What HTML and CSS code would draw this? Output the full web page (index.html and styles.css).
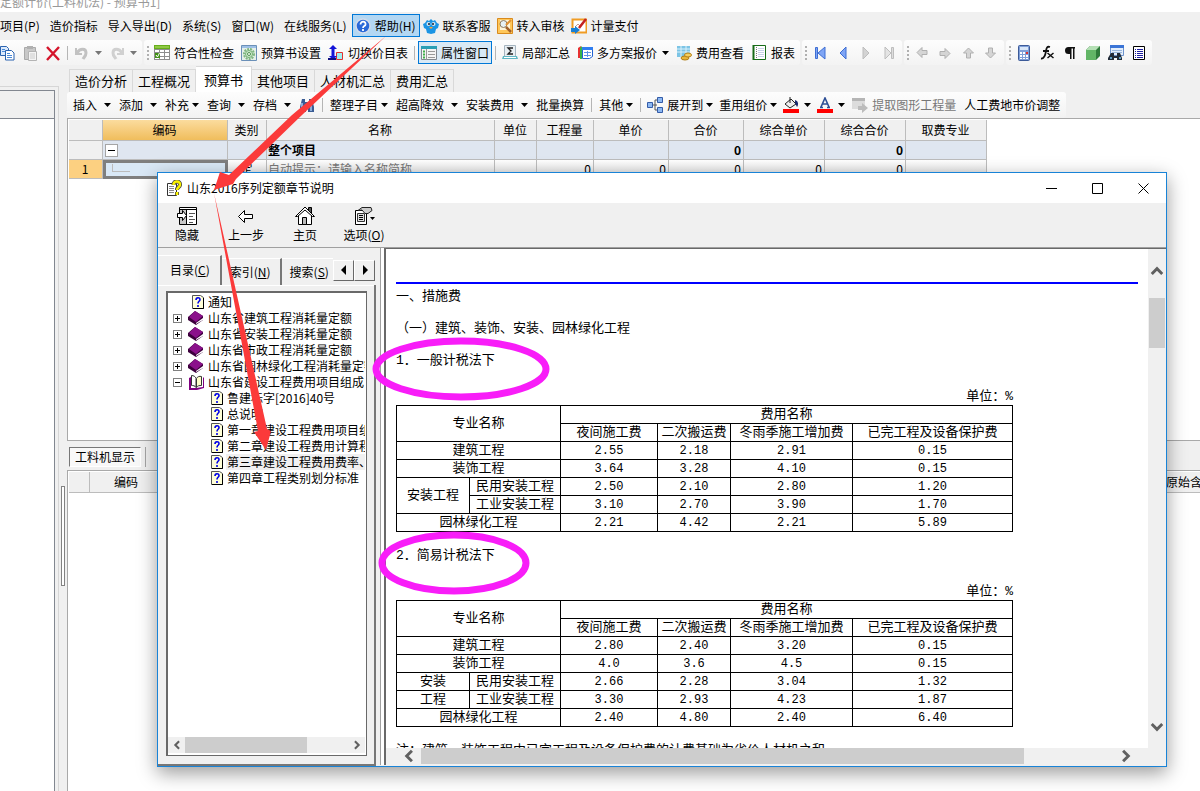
FILE: index.html
```html
<!DOCTYPE html>
<html lang="zh-CN">
<head>
<meta charset="utf-8">
<title>预算书</title>
<link rel="stylesheet" href="styles.css">
</head>
<body>
<svg class="defs" aria-hidden="true">
  <symbol id="caret" viewBox="0 0 7 4"><path d="M0 0h7L3.500 4z" fill="currentColor"/></symbol>
  <symbol id="copy" viewBox="0 0 16 16"><path d="M1.500 1.500h6l2 2v7h-8z" fill="#dbe9fb" stroke="#2a63b0"/><path d="M6.500 5.500h6l2.500 2.500v7h-8.500z" fill="#fff" stroke="#2a63b0"/><path d="M8 8.500h3M8 10.500h5M8 12.500h5M3 4.500h3M3 6.500h3" stroke="#4a8ad8"/></symbol>
  <symbol id="paste" viewBox="0 0 16 16"><path d="M2.500 2.500h11v12h-11z" fill="#c8c8c8" stroke="#aaa"/><path d="M5 1h6v3H5z" fill="#b0b0b0"/><path d="M6.500 6.500h8v9h-8z" fill="#f4f4f4" stroke="#b4b4b4"/><path d="M8 9h5M8 11h5M8 13h5" stroke="#ccc"/></symbol>
  <symbol id="del" viewBox="0 0 16 16"><path d="M2 2l12 13M14 2L2 15" stroke="#d5142b" stroke-width="2.400" fill="none"/></symbol>
  <symbol id="undo" viewBox="0 0 16 16"><path d="M2 3v6h6" fill="none" stroke="#c2c2c2" stroke-width="2"/><path d="M3 8c3-5 9-5 9 0 0 3-2 4-3 6" fill="none" stroke="#c2c2c2" stroke-width="3"/></symbol>
  <symbol id="redo" viewBox="0 0 16 16"><path d="M14 3v6H8" fill="none" stroke="#d0d0d0" stroke-width="2"/><path d="M13 8c-3-5-9-5-9 0 0 3 2 4 3 6" fill="none" stroke="#d0d0d0" stroke-width="3"/></symbol>
  <symbol id="check" viewBox="0 0 16 16"><path d="M0 1h16v14H0z" fill="#8d8d8d"/><path d="M0 0h16v4H0z" fill="#67ae1c"/><path d="M1 2h14" stroke="#b8e46d"/><path d="M1 5h4v2H1zM6 5h4v2H6zM11 5h4v2h-4zM6 8h4v3H6zM11 8h4v3h-4zM6 12h4v2H6zM11 12h4v2h-4zM1 8h4v6H1z" fill="#fff"/><path d="M1 8h5v5H1z" fill="#3f8f13"/><path d="M2 10l1.500 2 2-4" stroke="#fff" fill="none"/></symbol>
  <symbol id="gear" viewBox="0 0 16 16"><path d="M.5.5h15v15H.5z" fill="#e5f0ea" stroke="#6b90b8"/><path d="M1 1h14v2H1z" fill="#9dc0e6"/><circle cx="8" cy="9" r="5" fill="none" stroke="#7fb681" stroke-width="2" stroke-dasharray="2 1"/><circle cx="8" cy="9" r="3.500" fill="#d3ead3" stroke="#6fb070"/><circle cx="8" cy="9" r="1.500" fill="#fff" stroke="#4d944f"/></symbol>
  <symbol id="switch" viewBox="0 0 16 16"><path d="M8.500 7.500h6v7h-6z" fill="#9ff0f0" stroke="#e03030"/><path d="M5 0l4 4H6.500v7H9l-4 4-4-4h2.500V4H1z" fill="#1414d8"/><path d="M0 14h8" stroke="#101080" stroke-width="2"/></symbol>
  <symbol id="props" viewBox="0 0 16 16"><path d="M.5 1.500h15v13H.5z" fill="#f4f4f4" stroke="#808890"/><path d="M0 1h16v3H0z" fill="#2a9fb5"/><path d="M5.500 4v11" stroke="#999"/><path d="M7 6.500h7M7 9.500h7M7 12.500h7" stroke="#999"/><path d="M2 6.500h2M2 9.500h2M2 12.500h2" stroke="#3fb04a" stroke-width="2"/></symbol>
  <symbol id="sigma" viewBox="0 0 16 16"><path d="M2.500.5h11v11h-11z" fill="#e9eff3" stroke="#a5b4bf"/><path d="M11 3H6l3 3-3 3h5" fill="none" stroke="#222" stroke-width="1.300"/><path d="M1 11h14l1 3H0z" fill="#62b7c4"/><path d="M2 12.500h12" stroke="#fff"/></symbol>
  <symbol id="multi" viewBox="0 0 16 16"><path d="M1 3l3-2v12H1z" fill="#e83232"/><path d="M3 3l2-2v13H3z" fill="#34b34a"/><path d="M5.500 2.500h10v9l-3 2h-7z" fill="#fff" stroke="#2362d2"/><path d="M5 2h11v3H5z" fill="#2f7df0"/><path d="M7 7.500h7M7 10.500h7M10.500 6v6" stroke="#5c93e8"/></symbol>
  <symbol id="fee" viewBox="0 0 16 16"><path d="M1 1h13v11H1z" fill="#7cc4e5"/><path d="M1 4h13M1 7h13M5 1v11M10 1v11" stroke="#d9f1fb"/><ellipse cx="9" cy="13" rx="4" ry="2" fill="#e7b53a" stroke="#b07d15"/><ellipse cx="12" cy="10" rx="3.500" ry="2" fill="#f5cf60" stroke="#b07d15"/></symbol>
  <symbol id="report" viewBox="0 0 16 16"><path d="M2.500.5h12v14h-12z" fill="#fff" stroke="#176b17"/><path d="M2.500 0v15" stroke="#176b17" stroke-width="2"/><path d="M5.500 2v12" stroke="#777" stroke-dasharray="1 1"/><path d="M7 3.500h6M7 5.500h6M7 7.500h6M7 9.500h6M7 11.500h6" stroke="#c8d0e8"/></symbol>
  <symbol id="first" viewBox="0 0 16 16"><path d="M3.500 2.500h2v11h-2z" fill="#7fa5f5" stroke="#3e6ed3"/><path d="M13 2v12L6 8z" fill="#7fa5f5" stroke="#3e6ed3"/></symbol>
  <symbol id="prev" viewBox="0 0 16 16"><path d="M11 2v12L5 8z" fill="#7fa5f5" stroke="#3e6ed3"/></symbol>
  <symbol id="next" viewBox="0 0 16 16"><path d="M5 2v12l6-6z" fill="#d3d3d3" stroke="#bdbdbd"/></symbol>
  <symbol id="last" viewBox="0 0 16 16"><path d="M10.500 2.500h2v11h-2z" fill="#ddd" stroke="#bdbdbd"/><path d="M4 2v12l6-6z" fill="#e4e4e4" stroke="#bdbdbd"/></symbol>
  <symbol id="arrow" viewBox="0 0 16 16"><path d="M3 7.500l5-5v3h5v4H8v3z" fill="#d5d5d5" stroke="#b0b0b0"/></symbol>
  <symbol id="calc" viewBox="0 0 16 16"><rect x="2.500" y=".5" width="11" height="15" rx="1" fill="#7f9fd8" stroke="#3c5a98"/><path d="M4 2h8v3H4z" fill="#d8e6f8"/><path d="M4 7h2v2H4zM7 7h2v2H7zM4 10h2v2H4zM7 10h2v2H7zM10 10h2v2h-2zM4 13h2v1H4zM7 13h2v1H7zM10 13h2v1h-2z" fill="#fff"/><path d="M10 7h2v2h-2z" fill="#d33"/></symbol>
  <symbol id="fx" viewBox="0 0 16 16"><path d="M11 2C8 1 7.500 3 7 6S6 14 2 13.500M4 6h6" fill="none" stroke="#111" stroke-width="1.800"/><path d="M8.500 8l6 5M14.500 8l-6 5" stroke="#111" stroke-width="1.500"/></symbol>
  <symbol id="pilcrow" viewBox="0 0 16 16"><path d="M13 2H6.500a3.500 3.500 0 0 0 0 7H8v5h1.500V3.500h1.500V14h1.500V3.500H13z" fill="#111"/></symbol>
  <symbol id="cube" viewBox="0 0 16 16"><path d="M1 5l4-4h10v10l-4 4H1z" fill="#2e7a3a"/><path d="M1 5h10v10H1z" fill="#62b566"/><path d="M1 5l4-4h10l-4 4z" fill="#b5e0b5"/></symbol>
  <symbol id="find" viewBox="0 0 16 16"><path d="M2.500.5h13v10h-13z" fill="#e3eefb" stroke="#6c92cc"/><path d="M2 0h14v3H2z" fill="#3b74d6"/><path d="M4 5.500h10M4 7.500h10" stroke="#9ab7de"/><path d="M3 8h3v3h3V8h3l2 5v2H9v-2H6v2H0v-2z" fill="#222b38"/><circle cx="3" cy="13" r="1" fill="#6fc5f2"/><circle cx="12" cy="13" r="1" fill="#6fc5f2"/></symbol>
  <symbol id="list" viewBox="0 0 16 16"><path d="M2.500 1.500h11v13h-11z" fill="#fff" stroke="#000"/><path d="M4 4.500h1M6 4.500h6M4 6.500h1M6 6.500h6M4 8.500h1M6 8.500h6M4 10.500h1M6 10.500h6M4 12.500h1M6 12.500h6" stroke="#2020a0"/></symbol>
  <symbol id="qball" viewBox="0 0 16 16"><circle cx="8" cy="8" r="7" fill="#2968d8" stroke="#d3dcea" stroke-width="1.500"/><path d="M5.500 6.500c0-4 5.500-3.500 5 0-.3 1.800-2.500 1.500-2.500 3.500M8 11v2" fill="none" stroke="#fff" stroke-width="1.800"/></symbol>
  <symbol id="mascot" viewBox="0 0 16 16"><path d="M4 2l2 1 2-2 2 2 2-1 2 3 2 1-1 4-2 1-1 4-4 1-4-1-1-4-2-1-1-4 2-1z" fill="#1b94e4"/><circle cx="5.500" cy="6" r="2" fill="#d5e8f4"/><circle cx="10.500" cy="6" r="2" fill="#d5e8f4"/><circle cx="6" cy="6" r="1" fill="#123"/><circle cx="10" cy="6" r="1" fill="#123"/><path d="M6 9h4l-2 2z" fill="#f5a53c"/></symbol>
  <symbol id="audit" viewBox="0 0 16 16"><path d="M.5.5h15v15H.5z" fill="#ffc75a" stroke="#d98a1c"/><path d="M3 2h10v10H3z" fill="#fff4d8"/><circle cx="6.500" cy="6" r="3.500" fill="#e7f1f6" stroke="#8e7b62"/><path d="M9 9l5 5" stroke="#a3612a" stroke-width="2.500"/><path d="M14 2L9 7" stroke="#e19031" stroke-width="2"/></symbol>
  <symbol id="pay" viewBox="0 0 16 16"><path d="M1.500 1.500h14v13h-14z" fill="#fff" stroke="#f09c24" stroke-width="2"/><path d="M4 9l3-3 2 2 2-3" stroke="#c98" fill="none"/><path d="M15 1L8 10" stroke="#c32121" stroke-width="2.500"/><path d="M0 10h4V8l5 4-5 4v-2H0z" fill="#1a7fd2"/></symbol>
  <symbol id="bino" viewBox="0 0 16 16"><path d="M3 2h3v3h4V2h3l2 8v5H9v-5H7v5H1v-5z" fill="#3a5c94"/><path d="M3 6v8M12 6v8" stroke="#a9c8ef" stroke-width="1.500"/></symbol>
  <symbol id="tree" viewBox="0 0 16 16"><path d="M5 8h5M8 3v10M8 3h3M8 13h3" stroke="#555" fill="none"/><path d="M.5 5.500h5v5h-5zM10.500.5h5v5h-5zM10.500 10.500h5v5h-5z" fill="#8db8f2" stroke="#345ca8"/></symbol>
  <symbol id="bucket" viewBox="0 0 16 16"><path d="M2 7l6-5 5 5-6 4z" fill="#eee" stroke="#222"/><path d="M7 0v6" stroke="#222"/><path d="M12 3c3 1 4 4 2 7l-2-4z" fill="#1a2a70"/><path d="M0 12h16v4H0z" fill="#f00"/></symbol>
  <symbol id="fontcolor" viewBox="0 0 16 16"><path d="M4 10l4-9 4 9M5.500 7h5M3 10.500h3M10 10.500h3" fill="none" stroke="#2d4f96" stroke-width="1.600"/><path d="M0 12h16v4H0z" fill="#f00"/></symbol>
  <symbol id="extract" viewBox="0 0 16 16"><path d="M0 1h13v11H0z" fill="#dcdcdc"/><path d="M0 1h13v3H0z" fill="#b5b5b5"/><path d="M6 9h4V6l6 5-6 5v-3H6z" fill="#bcbcbc"/></symbol>
  <symbol id="topic" viewBox="0 0 12 14"><path d="M.5.5h8l3 2v11H.5z" fill="#ffffd8" stroke="#555"/><path d="M11.500 3v10.500H1" stroke="#000" fill="none"/><path d="M4 5c0-3 4-3 4-.5C8 6.500 6 6 6 8.500M6 10v2" fill="none" stroke="#0000e8" stroke-width="1.600"/></symbol>
  <symbol id="book" viewBox="0 0 16 16"><path d="M0 7l7-6 8 5v4l-7 5-8-5z" fill="#3c003c"/><path d="M1 7l6-6 8 5-7 6z" fill="#8b118b"/><path d="M8 13l7-5v2l-7 4z" fill="#fff"/></symbol>
  <symbol id="openbook" viewBox="0 0 16 16"><path d="M1 4l2-1v11h5l7-1V3l1 1v10l-7 2H1z" fill="#800080"/><path d="M3.500 1.500c2 0 4 1 4.500 3v9c-1-2-3-2-4.500-2z" fill="#fff" stroke="#333"/><path d="M8.500 4.500c1-2 3-2.500 5-2v9c-2 0-4 0-5 2z" fill="#ffffc8" stroke="#333"/></symbol>
  <symbol id="helpwin" viewBox="0 0 16 16"><path d="M1.500 3.500h9v12h-9z" fill="#fff" stroke="#333"/><path d="M3 6.500h5M3 8.500h5M3 10.500h5M3 12.500h5" stroke="#888"/><path d="M7.500 5c0-5 7-4.500 6.500 0-.5 2.500-3 2-3 5M11 12v3" fill="none" stroke="#444" stroke-width="4"/><path d="M7.500 5c0-5 7-4.500 6.500 0-.5 2.500-3 2-3 5M11 12v3" fill="none" stroke="#f8f000" stroke-width="2.500"/></symbol>
  <symbol id="hide" viewBox="0 0 22 20"><path d="M3.500 1.500h17v17h-17z" fill="#fff" stroke="#000"/><path d="M3 3.500h18" stroke="#000"/><path d="M4 4h6v14H4z" fill="#c8c8c8"/><path d="M10.500 4v15" stroke="#000"/><path d="M13 7.500h6M13 10.500h4M13 13.500h6M13 16.500h4" stroke="#555"/><path d="M1.500 7.500h5v-3l4 5-4 5v-3h-5z" fill="#fff" stroke="#000"/></symbol>
  <symbol id="back" viewBox="0 0 22 20"><path d="M3.500 10.500l6-6v4h8v4h-8v4z" fill="#fff" stroke="#000"/></symbol>
  <symbol id="home" viewBox="0 0 22 20"><path d="M14.500 1.500h3v6h-3z" fill="#555" stroke="#000"/><path d="M4.500 9L11 3l6.500 6v9.500h-13z" fill="#fff" stroke="#000"/><path d="M1.500 10.500L11 1l9.500 9.500h-2L11 4l-7.500 6.500z" fill="#fff" stroke="#000"/><path d="M8.500 11.500h4v7h-4z" fill="#bbb" stroke="#000"/></symbol>
  <symbol id="options" viewBox="0 0 22 20"><path d="M2.500 4.500h11v14h-11z" fill="#fff" stroke="#000"/><path d="M4.500 7.500h7v8h-7z" fill="#ddd" stroke="#333"/><path d="M6 9.500h4M6 11.500h4M6 13.500h4" stroke="#000"/><path d="M5 4.500l4-3h9l1 3-4 3h-3L9 4z" fill="#ccc" stroke="#222"/><path d="M17 11h5l-2.500 3z" fill="#000"/></symbol>
  <symbol id="chev" viewBox="0 0 12 12"><path d="M8.500 1.500L4 6l4.500 4.500" fill="none" stroke="#606060" stroke-width="2.500"/></symbol>
</svg>

<div class="app">
  <header class="titlebar">定额计价(工料机法) - 预算书1]</header>

  <nav class="menubar">
    <button class="menu menu-first">项目(P)</button>
    <button class="menu">造价指标</button>
    <button class="menu">导入导出(D)</button>
    <button class="menu">系统(S)</button>
    <button class="menu">窗口(W)</button>
    <button class="menu">在线服务(L)</button>
    <button class="menu menu-open"><svg class="ico"><use href="#qball"/></svg>帮助(H)</button>
    <button class="menu menu-link"><svg class="ico"><use href="#mascot"/></svg>联系客服</button>
    <button class="menu menu-link"><svg class="ico"><use href="#audit"/></svg>转入审核</button>
    <button class="menu menu-link"><svg class="ico"><use href="#pay"/></svg>计量支付</button>
  </nav>

  <div class="toolbars">
    <div class="group group-edit">
      <button class="tool" aria-label="复制"><svg class="ico"><use href="#copy"/></svg></button>
      <button class="tool" aria-label="粘贴"><svg class="ico"><use href="#paste"/></svg></button>
      <button class="tool" aria-label="删除"><svg class="ico"><use href="#del"/></svg></button>
      <i class="sep"></i>
      <button class="tool muted" aria-label="撤销"><svg class="ico"><use href="#undo"/></svg><svg class="caret"><use href="#caret"/></svg></button>
      <button class="tool muted" aria-label="恢复"><svg class="ico"><use href="#redo"/></svg><svg class="caret"><use href="#caret"/></svg></button>
    </div>
    <div class="group">
      <i class="grip"></i>
      <button class="tool"><svg class="ico"><use href="#check"/></svg>符合性检查</button>
      <button class="tool"><svg class="ico"><use href="#gear"/></svg>预算书设置</button>
      <button class="tool"><svg class="ico"><use href="#switch"/></svg>切换价目表</button>
      <i class="sep"></i>
      <button class="tool tool-on"><svg class="ico"><use href="#props"/></svg>属性窗口</button>
      <i class="sep"></i>
      <button class="tool"><svg class="ico"><use href="#sigma"/></svg>局部汇总</button>
      <button class="tool"><svg class="ico"><use href="#multi"/></svg>多方案报价<svg class="caret"><use href="#caret"/></svg></button>
      <button class="tool"><svg class="ico"><use href="#fee"/></svg>费用查看</button>
      <button class="tool"><svg class="ico"><use href="#report"/></svg>报表</button>
    </div>
    <div class="group">
      <i class="grip"></i>
      <button class="tool" aria-label="首条"><svg class="ico"><use href="#first"/></svg></button>
      <button class="tool" aria-label="上一条"><svg class="ico"><use href="#prev"/></svg></button>
      <button class="tool" aria-label="下一条"><svg class="ico"><use href="#next"/></svg></button>
      <button class="tool" aria-label="末条"><svg class="ico"><use href="#last"/></svg></button>
    </div>
    <div class="group">
      <i class="grip"></i>
      <button class="tool" aria-label="左移"><svg class="ico"><use href="#arrow"/></svg></button>
      <button class="tool" aria-label="右移"><svg class="ico turn-right"><use href="#arrow"/></svg></button>
      <button class="tool" aria-label="上移"><svg class="ico turn-up"><use href="#arrow"/></svg></button>
      <button class="tool" aria-label="下移"><svg class="ico turn-down"><use href="#arrow"/></svg></button>
    </div>
    <div class="group">
      <i class="grip"></i>
      <button class="tool" aria-label="计算器"><svg class="ico"><use href="#calc"/></svg></button>
      <button class="tool" aria-label="函数"><svg class="ico"><use href="#fx"/></svg></button>
      <button class="tool" aria-label="段落"><svg class="ico"><use href="#pilcrow"/></svg></button>
      <button class="tool" aria-label="体积"><svg class="ico"><use href="#cube"/></svg></button>
      <button class="tool" aria-label="查找"><svg class="ico"><use href="#find"/></svg></button>
      <button class="tool" aria-label="列表"><svg class="ico"><use href="#list"/></svg></button>
    </div>
  </div>

  <div class="workspace">
    <aside class="side"><div class="side-box"><div class="side-head"></div></div></aside>
    <div class="gutter"><i class="handle"></i></div>
    <main class="main">
      <nav class="tabs">
        <button class="tab">造价分析</button>
        <button class="tab">工程概况</button>
        <button class="tab tab-on">预算书</button>
        <button class="tab">其他项目</button>
        <button class="tab">人材机汇总</button>
        <button class="tab">费用汇总</button>
      </nav>
      <div class="actions">
        <button class="act split">插入<svg class="caret"><use href="#caret"/></svg></button>
        <button class="act split">添加<svg class="caret"><use href="#caret"/></svg></button>
        <button class="act">补充<svg class="caret"><use href="#caret"/></svg></button>
        <button class="act split">查询<svg class="caret"><use href="#caret"/></svg></button>
        <button class="act split">存档<svg class="caret"><use href="#caret"/></svg></button>
        <button class="act" aria-label="查找"><svg class="ico"><use href="#bino"/></svg></button>
        <i class="sep"></i>
        <button class="act">整理子目<svg class="caret"><use href="#caret"/></svg></button>
        <button class="act split">超高降效<svg class="caret"><use href="#caret"/></svg></button>
        <button class="act split">安装费用<svg class="caret"><use href="#caret"/></svg></button>
        <button class="act">批量换算</button>
        <i class="sep"></i>
        <button class="act">其他<svg class="caret"><use href="#caret"/></svg></button>
        <i class="sep"></i>
        <button class="act tight"><svg class="ico"><use href="#tree"/></svg>展开到<svg class="caret"><use href="#caret"/></svg></button>
        <button class="act tight">重用组价<svg class="caret"><use href="#caret"/></svg></button>
        <button class="act tight pick" aria-label="填充颜色"><svg class="ico"><use href="#bucket"/></svg><svg class="caret"><use href="#caret"/></svg></button>
        <button class="act tight pick" aria-label="字体颜色"><svg class="ico"><use href="#fontcolor"/></svg><svg class="caret"><use href="#caret"/></svg></button>
        <button class="act muted"><svg class="ico"><use href="#extract"/></svg>提取图形工程量</button>
        <button class="act">人工费地市价调整</button>
      </div>
      <section class="grid-pane">
        <table class="grid">
          <colgroup><col class="g-no"><col class="g-code"><col class="g-kind"><col class="g-name"><col class="g-unit"><col class="g-qty"><col class="g-price"><col class="g-price"><col class="g-wide"><col class="g-wide"><col class="g-wide"></colgroup>
          <thead><tr><th></th><th class="th-on">编码</th><th>类别</th><th>名称</th><th>单位</th><th>工程量</th><th>单价</th><th>合价</th><th>综合单价</th><th>综合合价</th><th>取费专业</th></tr></thead>
          <tbody>
            <tr class="total"><td class="no"></td><td><button class="fold" aria-label="折叠"></button></td><td></td><td>整个项目</td><td></td><td></td><td></td><td class="num">0</td><td></td><td class="num">0</td><td></td></tr>
            <tr class="entry"><td class="no no-on">1</td><td class="cell-on"><i class="branch"></i></td><td class="mid">定</td><td class="hint">自动提示：请输入名称简称</td><td></td><td class="num">0</td><td class="num">0</td><td class="num">0</td><td class="num">0</td><td class="num">0</td><td></td></tr>
          </tbody>
        </table>
      </section>
      <section class="lower">
        <div class="lower-bar"><button class="lower-tab">工料机显示</button><i class="lower-sep"></i></div>
        <div class="lower-pane"><div class="lower-head"><span class="lh-no"></span><span class="lh-code">编码</span><span class="lh-rest">原始含</span></div></div>
      </section>
    </main>
  </div>

  <section class="dialog" role="dialog" aria-labelledby="dlg-title">
    <header class="dlg-title">
      <svg class="ico"><use href="#helpwin"/></svg>
      <h1 id="dlg-title">山东2016序列定额章节说明</h1>
      <button class="win" aria-label="最小化"><svg viewBox="0 0 11 11"><path d="M0 5.500h11" stroke="#000"/></svg></button>
      <button class="win" aria-label="最大化"><svg viewBox="0 0 11 11"><path d="M.5.5h10v10H.5z" stroke="#000" fill="none"/></svg></button>
      <button class="win" aria-label="关闭"><svg viewBox="0 0 11 11"><path d="M.5.5l10 10M10.500.5l-10 10" stroke="#000"/></svg></button>
    </header>
    <div class="dlg-tools">
      <button class="big"><svg><use href="#hide"/></svg>隐藏</button>
      <button class="big"><svg><use href="#back"/></svg>上一步</button>
      <button class="big"><svg><use href="#home"/></svg>主页</button>
      <button class="big"><svg><use href="#options"/></svg><span>选项(<u>O</u>)</span></button>
    </div>
    <div class="dlg-body">
      <aside class="nav">
        <div class="nav-tabs">
          <button class="ntab ntab-on">目录(<u>C</u>)</button>
          <button class="ntab">索引(<u>N</u>)</button>
          <button class="ntab ntab-cut">搜索(<u>S</u>)</button>
          <button class="spin" aria-label="向左"><svg viewBox="0 0 6 10"><path d="M5 0v10L0 5z"/></svg></button>
          <button class="spin" aria-label="向右"><svg viewBox="0 0 6 10"><path d="M1 0v10l5-5z"/></svg></button>
        </div>
        <div class="nav-page">
          <div class="tree">
            <ul class="nodes">
              <li class="node lone"><svg class="topic"><use href="#topic"/></svg><a href="#">通知</a></li>
              <li class="node"><button class="pm plus" aria-label="展开"></button><svg class="ico"><use href="#book"/></svg><a href="#">山东省建筑工程消耗量定额</a></li>
              <li class="node"><button class="pm plus" aria-label="展开"></button><svg class="ico"><use href="#book"/></svg><a href="#">山东省安装工程消耗量定额</a></li>
              <li class="node"><button class="pm plus" aria-label="展开"></button><svg class="ico"><use href="#book"/></svg><a href="#">山东省市政工程消耗量定额</a></li>
              <li class="node"><button class="pm plus" aria-label="展开"></button><svg class="ico"><use href="#book"/></svg><a href="#">山东省园林绿化工程消耗量定额</a></li>
              <li class="node"><button class="pm" aria-label="折叠"></button><svg class="ico"><use href="#openbook"/></svg><a href="#">山东省建设工程费用项目组成</a></li>
              <li class="node leaf"><svg class="topic"><use href="#topic"/></svg><a href="#">鲁建标字[2016]40号</a></li>
              <li class="node leaf"><svg class="topic"><use href="#topic"/></svg><a href="#">总说明</a></li>
              <li class="node leaf"><svg class="topic"><use href="#topic"/></svg><a href="#">第一章建设工程费用项目组成</a></li>
              <li class="node leaf"><svg class="topic"><use href="#topic"/></svg><a href="#">第二章建设工程费用计算程序</a></li>
              <li class="node leaf"><svg class="topic"><use href="#topic"/></svg><a class="picked" href="#">第三章建设工程费用费率、</a></li>
              <li class="node leaf"><svg class="topic"><use href="#topic"/></svg><a href="#">第四章工程类别划分标准</a></li>
            </ul>
            <div class="hbar">
              <button class="sb" aria-label="向左滚动"><svg><use href="#chev"/></svg></button>
              <div class="track"><div class="thumb thumb-tree"></div></div>
              <button class="sb" aria-label="向右滚动"><svg class="flip"><use href="#chev"/></svg></button>
            </div>
          </div>
        </div>
      </aside>
      <div class="doc">
        <div class="doc-row">
          <article class="page">
            <hr class="rule">
            <p>一、措施费</p>
            <p>（一）建筑、装饰、安装、园林绿化工程</p>
            <p>1．一般计税法下</p>
            <table class="rates">
              <caption>单位：%</caption>
              <colgroup><col class="r-a"><col class="r-b"><col class="r-c"><col class="r-d"><col class="r-e"><col class="r-f"></colgroup>
              <tr><th colspan="2" rowspan="2">专业名称</th><th colspan="4">费用名称</th></tr>
              <tr><th>夜间施工费</th><th>二次搬运费</th><th>冬雨季施工增加费</th><th>已完工程及设备保护费</th></tr>
              <tr><th colspan="2">建筑工程</th><td>2.55</td><td>2.18</td><td>2.91</td><td>0.15</td></tr>
              <tr><th colspan="2">装饰工程</th><td>3.64</td><td>3.28</td><td>4.10</td><td>0.15</td></tr>
              <tr><th rowspan="2">安装工程</th><th>民用安装工程</th><td>2.50</td><td>2.10</td><td>2.80</td><td>1.20</td></tr>
              <tr><th>工业安装工程</th><td>3.10</td><td>2.70</td><td>3.90</td><td>1.70</td></tr>
              <tr><th colspan="2">园林绿化工程</th><td>2.21</td><td>4.42</td><td>2.21</td><td>5.89</td></tr>
            </table>
            <p>2．简易计税法下</p>
            <table class="rates">
              <caption>单位：%</caption>
              <colgroup><col class="r-a"><col class="r-b"><col class="r-c"><col class="r-d"><col class="r-e"><col class="r-f"></colgroup>
              <tr><th colspan="2" rowspan="2">专业名称</th><th colspan="4">费用名称</th></tr>
              <tr><th>夜间施工费</th><th>二次搬运费</th><th>冬雨季施工增加费</th><th>已完工程及设备保护费</th></tr>
              <tr><th colspan="2">建筑工程</th><td>2.80</td><td>2.40</td><td>3.20</td><td>0.15</td></tr>
              <tr><th colspan="2">装饰工程</th><td>4.0</td><td>3.6</td><td>4.5</td><td>0.15</td></tr>
              <tr><th>安装</th><th>民用安装工程</th><td>2.66</td><td>2.28</td><td>3.04</td><td>1.32</td></tr>
              <tr><th>工程</th><th>工业安装工程</th><td>3.30</td><td>2.93</td><td>4.23</td><td>1.87</td></tr>
              <tr><th colspan="2">园林绿化工程</th><td>2.40</td><td>4.80</td><td>2.40</td><td>6.40</td></tr>
            </table>
            <p>注：建筑、装饰工程中已完工程及设备保护费的计费基础为省价人材机之和</p>
          </article>
          <div class="vbar">
            <button class="sb" aria-label="向上滚动"><svg class="up"><use href="#chev"/></svg></button>
            <div class="track"><div class="thumb thumb-v"></div></div>
            <button class="sb" aria-label="向下滚动"><svg class="down"><use href="#chev"/></svg></button>
          </div>
        </div>
        <div class="hbar hbar-doc">
          <button class="sb" aria-label="向左滚动"><svg><use href="#chev"/></svg></button>
          <div class="track"><div class="thumb thumb-doc"></div></div>
          <button class="sb" aria-label="向右滚动"><svg class="flip"><use href="#chev"/></svg></button>
        </div>
      </div>
    </div>
  </section>

  <svg class="marks" viewBox="0 0 600 620" aria-hidden="true">
    <path d="M386 36L292 115 229 175 220 172 214 190 233 184 236 179 302 115z" fill="#fb3a3a"/>
    <path d="M214 193L258 431 254 432 266 450 271 431 267 429z" fill="#fb3a3a"/>
    <ellipse cx="461" cy="369" rx="85" ry="28" fill="none" stroke="#f81df8" stroke-width="7"/>
    <ellipse cx="454" cy="563" rx="72" ry="28" fill="none" stroke="#f81df8" stroke-width="7"/>
  </svg>
</div>
</body>
</html>
```

FILE: styles.css
```css
* { box-sizing: border-box; }

body {
  margin: 0;
  background: #fff;
  color: #000;
  font: 12px/16px "Noto Sans CJK SC", sans-serif;
}

button {
  margin: 0;
  padding: 0;
  border: 0;
  background: none;
  color: inherit;
  font: inherit;
  white-space: nowrap;
}

svg { display: block; flex: none; }
.defs { display: none; }
.ico { width: 16px; height: 16px; }
.caret { width: 7px; height: 4px; }

.app {
  position: relative;
  display: flex;
  flex-direction: column;
  height: 100vh;
  min-height: 600px;
  overflow: hidden;
  background: #f0f0f0;
}

.titlebar {
  display: flex;
  align-items: flex-end;
  height: 12px;
  padding-bottom: 2px;
  background: #fff;
  color: #999;
  white-space: nowrap;
}

/* menu bar */
.menubar { display: flex; align-items: center; height: 27px; }
.menu {
  display: flex;
  align-items: center;
  gap: 4px;
  height: 23px;
  padding: 0 5px;
}
.menu-first { padding-left: 0; }
.menu-open { padding: 0 3px 0 2px; border: 1px solid #0078d7; background: #b3d7f3; }
.menu-link { padding: 0 3px; }

/* toolbars */
.toolbars { display: flex; gap: 2px; height: 27px; padding-top: 1px; }
.group {
  display: flex;
  align-items: center;
  gap: 1px;
  height: 25px;
  padding-right: 2px;
  border-radius: 3px;
  background: linear-gradient(#fdfdfd, #f3f3f3);
}
.group-edit { margin-left: -4px; }
.tool {
  display: flex;
  align-items: center;
  gap: 4px;
  height: 23px;
  padding: 0 3px;
}
.tool-on { border: 1px solid #0078d7; padding: 0 2px; background: #d9e9f5; }
.tool .caret { margin-left: 1px; }
.muted { color: #777; }
.sep { width: 1px; height: 14px; margin: 0 2px; background: #b5b5b5; }
.grip {
  width: 2px;
  height: 14px;
  margin: 0 1px 0 3px;
  background: repeating-linear-gradient(#b0b0b0 0 2px, transparent 2px 4px);
}
.turn-right, .flip { transform: rotate(180deg); }
.turn-up, .up { transform: rotate(90deg); }
.turn-down, .down { transform: rotate(270deg); }

/* workspace */
.workspace { display: flex; flex: 1; min-height: 0; }
.side {
  width: 59px;
  margin-top: 20px;
  padding: 3px 3px 0 0;
  border: solid #d6d6d6;
  border-width: 1px 1px 0 0;
}
.side-box { height: 100%; border: solid #828790; border-width: 1px 1px 0 0; background: #fff; }
.side-head { height: 28px; border-bottom: 1px solid #828790; background: #f0f0f0; }
.gutter {
  display: flex;
  flex-direction: column;
  justify-content: flex-end;
  align-items: center;
  width: 8px;
  padding-bottom: 205px;
}
.handle { width: 4px; height: 100px; border: 1px solid #828282; background: #fff; }
.main { display: flex; flex: 1; flex-direction: column; min-width: 0; }

.tabs { display: flex; align-items: flex-end; height: 26px; padding-left: 2px; }
.tab {
  height: 23px;
  padding: 0 5px;
  border: solid #d9d9d9;
  border-width: 1px 1px 0 0;
  font-size: 13px;
}
.tab:first-child { border-left-width: 1px; }
.tab-on { height: 26px; padding: 0 8px; background: #fff; }

.actions {
  display: flex;
  align-items: center;
  align-self: flex-start;
  height: 26px;
  padding: 0 2px;
  border-radius: 3px;
  background: linear-gradient(#fdfdfd, #f2f2f2);
}
.act { display: flex; align-items: center; gap: 4px; height: 24px; padding: 0 4px; }
.act .caret { margin-left: -1px; }
.split .caret { margin-left: 3px; }
.tight { padding: 0 3px; }
.pick .caret { margin-left: 1px; }
.actions .sep { margin: 0 3px; }

/* estimate grid */
.grid-pane {
  flex: 321 1 0;
  padding: 1px 0 0 1px;
  border: solid #a9a9a9;
  border-width: 1px 0 1px 1px;
  background: #fff;
}
.grid { width: 918px; border-spacing: 0; table-layout: fixed; }
.g-no { width: 34px; }
.g-code { width: 125px; }
.g-kind { width: 39px; }
.g-name { width: 228px; }
.g-unit { width: 42px; }
.g-qty { width: 57px; }
.g-price { width: 75px; }
.g-wide { width: 81px; }
.grid th, .grid td {
  height: 19px;
  padding: 0 2px 0 1px;
  border: solid #bcbcbc;
  border-width: 0 1px 1px 0;
  overflow: hidden;
  white-space: nowrap;
}
.grid th { height: 21px; background: #f0f0f0; font-weight: normal; }
.grid .th-on { background: linear-gradient(#fbdc9e, #f0bd5c); }
.total td { background: #dfe6f0; font-weight: bold; }
.entry td { background: linear-gradient(#fff, #dedede); }
.grid .no { background: #f0f0f0; text-align: center; }
.grid .no-on { background: #fcd081; }
.grid .cell-on { padding: 0; border: 3px solid #7f7f7f; background: #d9e8f6; }
.branch { display: block; width: 18px; height: 8px; margin: 0 0 4px 6px; border: solid #bbb; border-width: 0 0 1px 1px; }
.mid { text-align: center; }
.hint { color: #777; }
.num { text-align: right; }
.fold {
  display: grid;
  place-items: center;
  width: 13px;
  height: 13px;
  margin-left: 1px;
  border: 1px solid #a5a5a5;
  background: #fff;
}
.fold::before { content: ""; width: 7px; height: 1px; background: #000; }

/* lower pane */
.lower { display: flex; flex: 352 1 0; flex-direction: column; }
.lower-bar { display: flex; align-items: center; gap: 4px; height: 29px; padding: 4px 2px 0; }
.lower-tab { height: 20px; padding: 0 5px; border: 1px solid #8a8a8a; border-color: #777 #fff #fff #777; background: #f8f8f8; }
.lower-sep { width: 1px; height: 20px; background: #a5a5a5; }
.lower-pane { flex: 1; padding: 1px 0 0 1px; border: solid #a9a9a9; border-width: 1px 0 0 1px; background: #fff; }
.lower-head { display: flex; align-items: center; height: 21px; border-bottom: 1px solid #bcbcbc; background: #f0f0f0; }
.lh-no { width: 21px; height: 20px; border-right: 1px solid #bcbcbc; }
.lh-code { width: 72px; text-align: center; }
.lh-rest { margin-left: auto; width: 34px; white-space: nowrap; }

/* help window */
.dialog {
  position: absolute;
  inset: 172px 33px 24px 157px;
  display: flex;
  flex-direction: column;
  border: 1px solid #1883d7;
  background: #f0f0f0;
  box-shadow: 0 6px 18px rgba(0, 0, 0, .4);
}
.dlg-title { display: flex; align-items: center; height: 30px; padding-left: 8px; background: #fff; }
.dlg-title h1 { flex: 1; margin: 0 0 0 5px; font-size: 12px; font-weight: normal; }
.win { display: grid; place-items: center; width: 46px; height: 30px; }
.win svg { width: 11px; height: 11px; }
.dlg-tools { display: flex; gap: 1px; height: 44px; padding-top: 3px; }
.big { display: flex; flex-direction: column; align-items: center; gap: 1px; width: 58px; }
.big svg { width: 22px; height: 20px; }
.dlg-body { display: flex; flex: 1; gap: 8px; min-height: 0; border-top: 1px solid #a0a0a0; }

.nav { display: flex; flex-direction: column; width: 218px; padding-top: 7px; }
.nav-tabs { display: flex; align-items: flex-end; height: 30px; padding: 0 1px 0 0; }
.ntab {
  height: 27px;
  padding: 0 9px 0 8px;
  border: solid #fff;
  border-width: 1px 2px 0 0;
  border-right-color: #777;
}
.ntab-on { height: 30px; padding: 0 10px 2px 12px; }
.ntab-cut { flex: 1; min-width: 0; border-right: 0; padding: 0 0 0 8px; text-align: left; overflow: hidden; }
.spin {
  display: grid;
  place-items: center;
  align-self: center;
  width: 21px;
  height: 21px;
  border: 1px solid;
  border-color: #fff #696969 #696969 #fff;
}
.spin svg { width: 6px; height: 10px; }
.nav-page {
  flex: 1;
  min-height: 0;
  padding: 6px 7px 8px 8px;
  border: solid #777;
  border-width: 0 2px 2px 0;
  box-shadow: inset 0 1px #fff;
}
.tree {
  display: flex;
  flex-direction: column;
  height: 100%;
  padding-right: 1px;
  border: 2px solid #696969;
  border-width: 2px 1px 1px 2px;
  background: #fff;
}
.nodes { flex: 1; min-height: 0; margin: 0; padding: 1px 0 0; list-style: none; overflow: hidden; }
.node { display: flex; align-items: center; height: 16px; padding-left: 5px; white-space: nowrap; }
.node a { padding-left: 1px; color: #000; text-decoration: none; }
.lone { padding-left: 24px; }
.leaf { padding-left: 43px; }
.topic { width: 12px; height: 14px; margin-right: 3px; }
.node .ico { margin: 0 3px 0 6px; }
.picked { flex: 1; background: #f0f0f0; }
.pm {
  flex: none;
  width: 9px;
  height: 9px;
  border: 1px solid #808080;
  background: linear-gradient(#000, #000) center / 5px 1px no-repeat;
}
.plus {
  background:
    linear-gradient(#000, #000) center / 5px 1px no-repeat,
    linear-gradient(#000, #000) center / 1px 5px no-repeat;
}

/* scroll bars */
.hbar { display: flex; height: 16px; margin-bottom: 2px; background: #f0f0f0; }
.vbar { display: flex; flex-direction: column; width: 18px; padding: 13px 1px 12px; background: #f0f0f0; }
.sb { display: grid; place-items: center; width: 17px; height: 16px; }
.sb svg { width: 10px; height: 10px; }
.track { flex: 1; min-width: 0; min-height: 0; }
.thumb { background: #cdcdcd; }
.hbar .thumb { height: 16px; }
.thumb-tree { width: 75%; }
.hbar-doc { height: 17px; margin: 0; padding: 0 28px 0 11px; }
.hbar-doc .sb { width: 24px; }
.thumb-doc { width: 87%; }
.vbar .sb { width: 16px; height: 18px; }
.vbar .sb svg, .hbar-doc svg { width: 14px; height: 14px; }
.vbar .track { padding-top: 18px; }
.thumb-v { height: 50px; }

/* document */
.doc {
  display: flex;
  flex: 1;
  flex-direction: column;
  min-width: 0;
  margin-bottom: 1px;
  border: solid #696969;
  border-width: 1px 0 0 2px;
  background: #fff;
  box-shadow: -3px 0 #fff, -4px 0 #a0a0a0;
}
.doc-row { display: flex; flex: 1; min-height: 0; }
.page {
  flex: 1;
  min-width: 0;
  padding: 33px 10px 0;
  overflow: hidden;
  font: 13px/16px "Liberation Mono", "Noto Sans CJK SC", monospace;
}
.page p { margin: 0 0 16px; white-space: nowrap; }
.rule { height: 2px; margin: 0 0 5px; border: 0; background: #00f; }
.rates {
  width: 617px;
  margin: 20px 0 16px;
  border-collapse: collapse;
  table-layout: fixed;
}
.rates caption { height: 16px; text-align: right; }
.r-a { width: 73px; }
.r-b { width: 91px; }
.r-c { width: 97px; }
.r-d { width: 73px; }
.r-e { width: 122px; }
.r-f { width: 160px; }
.rates th, .rates td {
  height: 18px;
  padding: 0;
  border: 1px solid #000;
  font-weight: normal;
  line-height: 16px;
  text-align: center;
  white-space: nowrap;
}
.rates td { font-size: 12px; }

.marks { position: absolute; left: 0; top: 0; width: 600px; height: 620px; pointer-events: none; }
```
